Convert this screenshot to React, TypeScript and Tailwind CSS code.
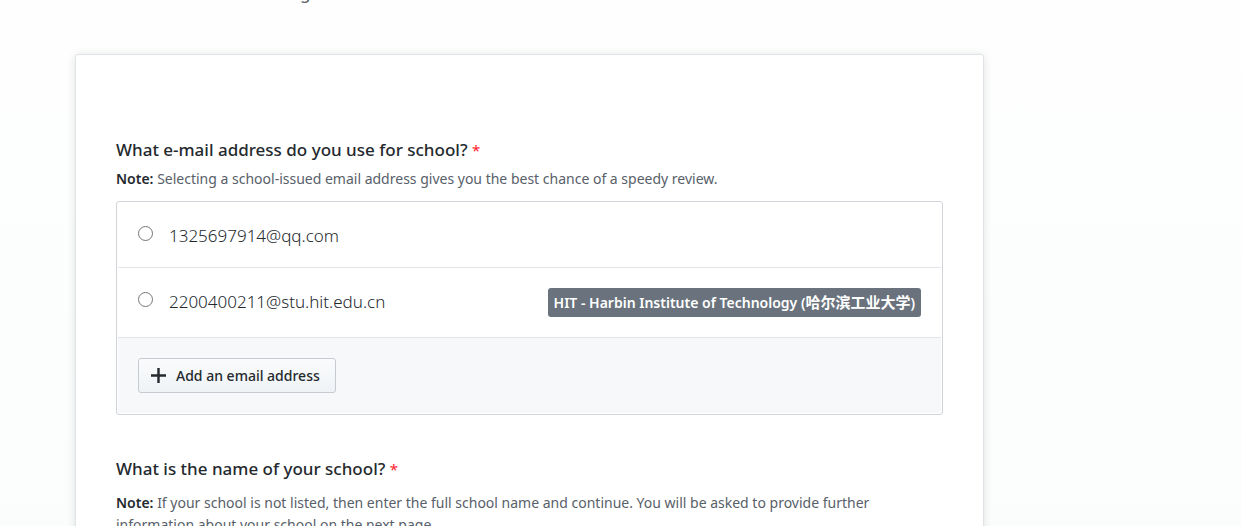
import type { ReactNode } from "react";

const emails = [
  { address: "1325697914@qq.com", school: null },
  {
    address: "2200400211@stu.hit.edu.cn",
    school: { name: "HIT - Harbin Institute of Technology", localName: "哈尔滨工业大学" },
  },
];

function Required() {
  return <span className="text-[15px] font-normal text-[#ff1a2b]">*</span>;
}

function Note({ children }: { children: ReactNode }) {
  return (
    <p className="text-[14px] leading-[22px] text-[#586069]">
      <strong className="font-semibold text-[#24292e]">Note:</strong> {children}
    </p>
  );
}

function PlusIcon() {
  return (
    <svg aria-hidden="true" viewBox="0 0 15 15" className="size-[15px] shrink-0" fill="currentColor">
      <path d="M6.3 0h2.4v6.3H15v2.4H8.7V15H6.3V8.7H0V6.3h6.3z" />
    </svg>
  );
}

export default function App() {
  return (
    <main className="h-screen overflow-hidden bg-linear-to-b from-[#fefefe] to-[#fbfdfd] pr-[257px] pl-[75px] font-['Noto_Sans','Noto_Sans_CJK_SC',sans-serif] text-[#24292e]">
      <header className="flex h-[54px] items-start pl-[225px]">
        <p className="-mt-5 text-[17px] leading-[26px] text-[#586069]">g</p>
      </header>
      <form className="rounded-[3px] border border-[#dfe2e6] bg-white px-10 pt-[82px] pb-20 shadow-[0_1px_8px_rgba(27,31,35,0.12)]">
        <fieldset>
          <legend className="text-[17px] leading-[26px] font-medium">
            What e-mail address do you use for school? <Required />
          </legend>
          <div className="pt-[5px]">
            <Note>Selecting a school-issued email address gives you the best chance of a speedy review.</Note>
          </div>
          <div className="mt-[11px] rounded-[3px] border border-[#d1d5da] bg-white px-px pb-px">
            {emails.map(({ address, school }) => (
              <label key={address} className="flex items-start border-b border-[#e1e4e8] p-5">
                <input
                  type="radio"
                  name="email"
                  className="mt-1 size-[15px] shrink-0 appearance-none rounded-full border border-[#767676] bg-white checked:border-4 checked:border-[#0366d6]"
                />
                <span className="ml-4 flex-1 pt-[3px] text-[17px] leading-[22px] font-light">{address}</span>
                {school && (
                  <span className="rounded-[3px] bg-[#6a737d] px-[6px] text-[14px] leading-[29px] font-semibold text-white">
                    {school.name} (
                    <span lang="zh" className="text-[15px]">
                      {school.localName}
                    </span>
                    )
                  </span>
                )}
              </label>
            ))}
            <div className="bg-[#f6f8fa] p-5">
              <button
                type="button"
                className="flex h-[35px] items-center gap-[10px] rounded-[3px] border border-[#c6cbd1] bg-linear-to-b from-[#fafbfc] to-[#eff3f6] pr-[15px] pl-3 text-[14px] font-medium"
              >
                <PlusIcon />
                Add an email address
              </button>
            </div>
          </div>
        </fieldset>
        <section className="pt-[41px]">
          <h2 className="text-[17px] leading-[26px] font-medium">
            What is the name of your school? <Required />
          </h2>
          <div className="pt-[10px]">
            <Note>
              If your school is not listed, then enter the full school name and continue. You will be asked to provide
              further information about your school on the next page.
            </Note>
          </div>
        </section>
      </form>
    </main>
  );
}
